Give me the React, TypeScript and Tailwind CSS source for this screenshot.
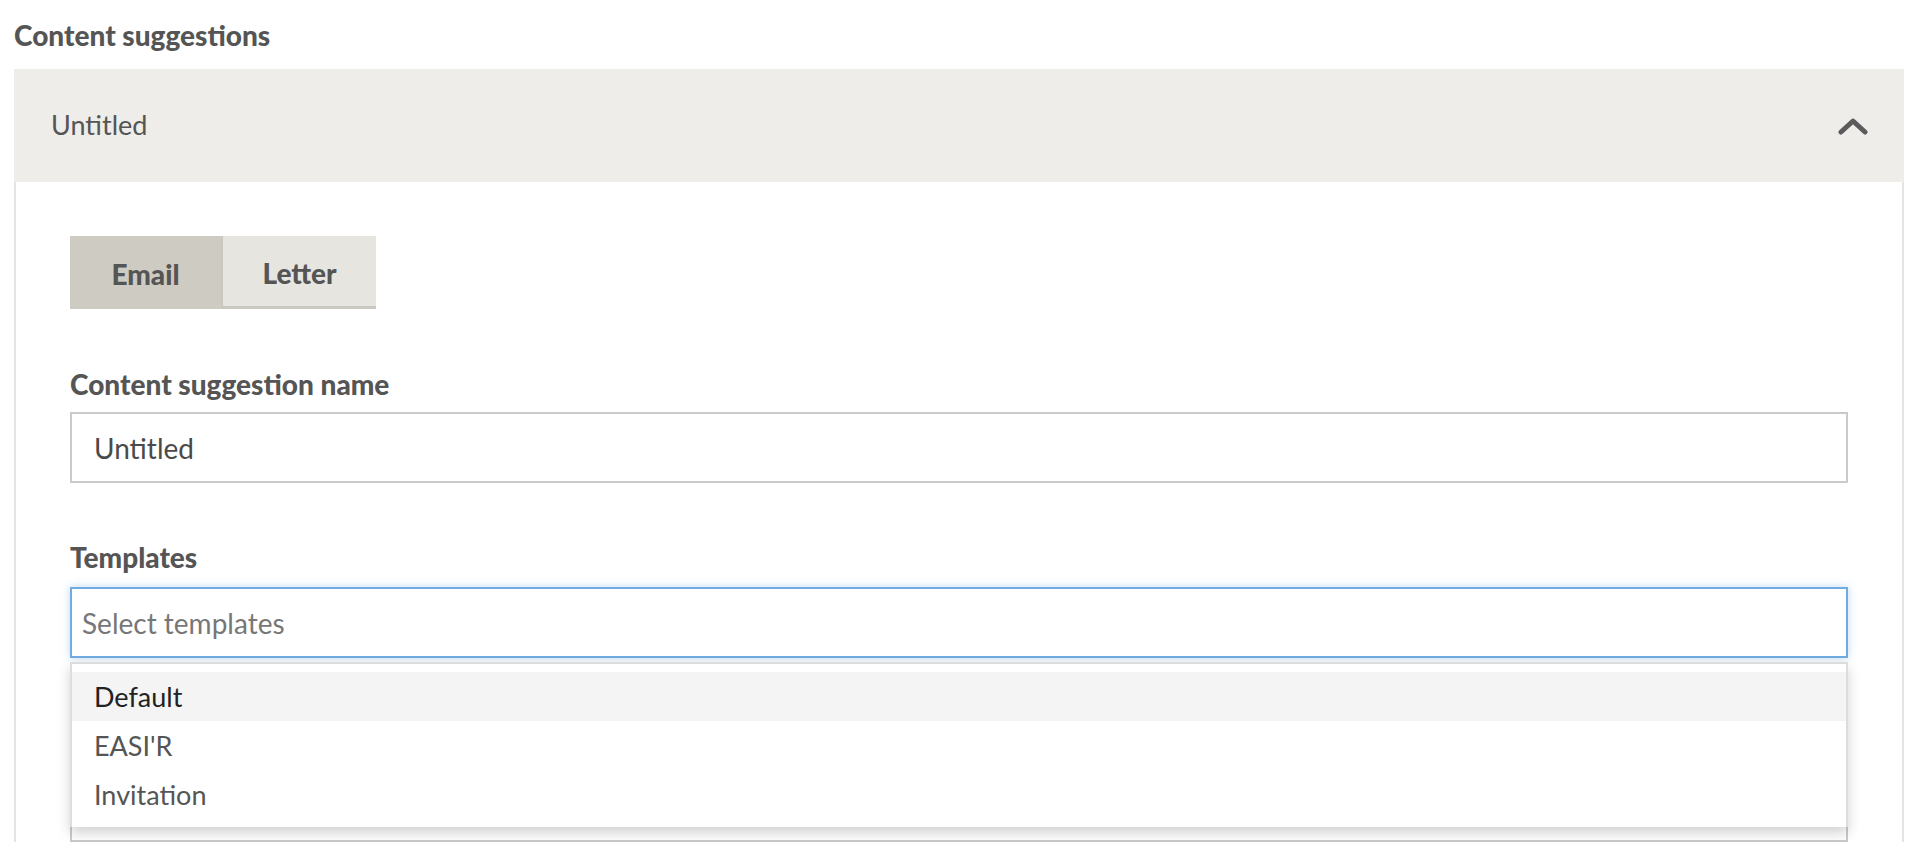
import React from "react";

// Options shown in the open templates dropdown
const templateOptions = ["Default", "EASI'R", "Invitation"];

const ChevronUp = () => (
  <svg width="30" height="20" viewBox="0 0 30 20" fill="none">
    <polyline
      points="3,16 15,5 27,16"
      stroke="#5b5b5b"
      strokeWidth="5"
      strokeLinecap="round"
      strokeLinejoin="round"
    />
  </svg>
);

const App: React.FC = () => {
  return (
    <div
      className="h-[844px] w-full overflow-hidden bg-white pl-[14px] pr-[14px] text-[#555555]"
      style={{ fontFamily: "Lato, 'Open Sans', sans-serif" }}
    >
      {/* Section title */}
      <h2 className="pt-[19px] text-[28px] font-black leading-[32px]">
        Content suggestions
      </h2>

      {/* Accordion */}
      <div className="mt-[18px]">
        <div className="flex h-[113px] items-center justify-between bg-[#eeede9] pl-[37px] pr-[36px]">
          <span className="text-[27px]">Untitled</span>
          <ChevronUp />
        </div>

        <div className="border-x-2 border-[#e5e4df] px-[54px] pt-[54px]">
          {/* Email / Letter tabs */}
          <div className="flex h-[73px]">
            <button className="w-[151px] bg-[#cecbc3] pt-[3px] text-[28px] font-black text-[#555555]">
              Email
            </button>
            <button className="w-[155px] border-b-[3px] border-l-2 border-[#c9c7c0] bg-[#e6e5e0] pt-[3px] text-[28px] font-black text-[#555555]">
              Letter
            </button>
          </div>

          {/* Name field */}
          <label className="mt-[59px] block text-[28px] font-black leading-[32px]">
            Content suggestion name
          </label>
          <div className="mt-[12px] flex h-[71px] items-center border-2 border-[#cacaca] px-[22px] pt-[1px] text-[28px] text-[#4a4a4a]">
            Untitled
          </div>

          {/* Templates field */}
          <label className="mt-[58px] block text-[28px] font-black leading-[32px]">
            Templates
          </label>
          <div className="relative mt-[14px]">
            <div className="flex h-[71px] items-center border-2 border-[#72aae2] px-[10px] pt-[1px] text-[28px] text-[#777777] shadow-[0_0_8px_rgba(114,170,226,0.45)]">
              Select templates
            </div>

            {/* Open dropdown menu */}
            <div className="absolute left-0 right-0 top-full z-10 mt-[4px] border-2 border-b-0 border-[#dddddd] bg-white pb-[8px] pt-[8px] shadow-[0_6px_12px_rgba(0,0,0,0.18)]">
              {templateOptions.map((option, i) => (
                <div
                  key={option}
                  className={`flex h-[49px] items-center px-[22px] pt-[1px] text-[27px] ${
                    i === 0 ? "bg-[#f4f4f4] text-[#222222]" : "text-[#555555]"
                  }`}
                >
                  {option}
                </div>
              ))}
            </div>
          </div>

          {/* Field below, hidden behind the dropdown */}
          <div className="mt-[14px] h-[170px] border-2 border-[#cacaca]" />
        </div>
      </div>
    </div>
  );
};

export default App;
